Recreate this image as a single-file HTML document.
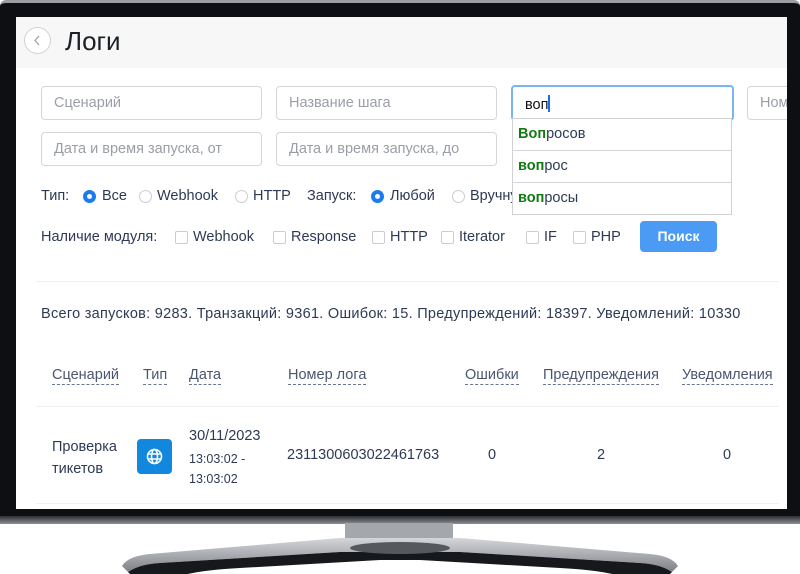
<!DOCTYPE html>
<html><head><meta charset="utf-8"><style>
*{box-sizing:border-box;margin:0;padding:0}
body{width:800px;height:574px;background:#fff;position:relative;overflow:hidden;font-family:"Liberation Sans",sans-serif;color:#2d3a55}
.bezel{position:absolute;left:0;top:0;width:800px;height:524px;background:#0d0f12;border-radius:6px 6px 2px 2px;border-top:3px solid #9a9da2}
.chin{position:absolute;left:0;top:516px;width:800px;height:8px;background:linear-gradient(#2a2c30,#8c8f94)}
.screen{position:absolute;left:16px;top:17px;width:771px;height:492px;background:#fff;overflow:hidden}
.hdr{position:absolute;left:0;top:0;width:771px;height:51px;background:#f7f7f7}
.panel{position:absolute;left:8px;top:51px;width:763px;height:441px;background:#fff}
.abs{position:absolute;white-space:nowrap}
.inp{position:absolute;height:34px;border:1px solid #d4d6da;border-radius:4px;font-size:14.5px;color:#9a9ea6;padding:8px 12px;white-space:nowrap;overflow:hidden}
.t{font-size:14.5px;color:#2d3a55}
.rad{position:absolute;width:13px;height:13px;border:1px solid #c9ccd1;border-radius:50%}
.rad.on{border:4px solid #1a7cf0}
.cb{position:absolute;width:13px;height:13px;border:1px solid #c9ccd1;border-radius:2px}
.dd{position:absolute;left:496px;top:101px;width:220px;height:97px;background:#fff;border:1px solid #cfd1d4}
.dd div{height:32px;border-bottom:1px solid #d4d6d9;font-size:14.5px;padding:7px 5px;color:#2d3a55}
.dd b{color:#137a13}
.th{position:absolute;top:350px;font-size:14.5px;color:#4a5570;border-bottom:1px dashed #6a7590;line-height:17px}
.line{position:absolute;left:20px;width:743px;height:1px;background:#eef0f2}
</style></head><body>
<div class="bezel"></div>
<div class="chin"></div>
<svg class="abs" style="left:0;top:520px" width="800" height="54">
<defs><linearGradient id="g" x1="0" y1="0" x2="0" y2="1"><stop offset="0" stop-color="#d4d6d9"/><stop offset="1" stop-color="#7d8086"/></linearGradient></defs>
<rect x="345" y="3" width="108" height="20" fill="#a4a7ac"/>
<path d="M122 46 Q128 36 150 34 L340 18 L460 18 L650 34 Q672 36 678 46 L672 52 Q660 44 640 43 L460 32 L340 32 L160 43 Q140 44 128 52Z" fill="url(#g)"/>
<path d="M128 52 Q140 44 160 43 L340 32 L460 32 L640 43 Q660 44 672 52 L668 56 L620 56 Q600 50 560 48 L420 40 L380 40 L240 48 Q200 50 180 56 L132 56Z" fill="#17181b"/>
<ellipse cx="400" cy="28" rx="50" ry="6" fill="#55585d"/>
</svg>
<div class="screen">
 <div class="hdr">
  <div class="abs" style="left:8px;top:10px;width:27px;height:27px;border:1px solid #d0d2d5;border-radius:50%;background:#fff"><svg width="25" height="25" viewBox="0 0 25 25"><path d="M14 8L10 12.5L14 17" fill="none" stroke="#a0a4aa" stroke-width="1.3"/></svg></div>
  <div class="abs" style="left:49px;top:9px;font-size:26px;color:#1b1f28">Логи</div>
 </div>
 <div class="panel"></div>
 <div class="inp" style="left:25px;top:69px;width:221px">Сценарий</div>
 <div class="inp" style="left:260px;top:69px;width:221px">Название шага</div>
 <div class="inp" style="left:495px;top:68px;width:223px;height:36px;border:2px solid #7ab4f5;color:#111">воп<span style="display:inline-block;width:2px;height:17px;background:#1a6ff0;vertical-align:-3px"></span></div>
 <div class="inp" style="left:731px;top:69px;width:60px">Ном</div>
 <div class="inp" style="left:25px;top:115px;width:221px">Дата и время запуска, от</div>
 <div class="inp" style="left:260px;top:115px;width:221px">Дата и время запуска, до</div>

 <div class="abs t" style="left:25px;top:171px">Тип:</div>
 <span class="rad on" style="left:67px;top:173px"></span><div class="abs t" style="left:86px;top:171px">Все</div>
 <span class="rad" style="left:123px;top:173px"></span><div class="abs t" style="left:141px;top:171px">Webhook</div>
 <span class="rad" style="left:219px;top:173px"></span><div class="abs t" style="left:237px;top:171px">HTTP</div>
 <div class="abs t" style="left:291px;top:171px">Запуск:</div>
 <span class="rad on" style="left:355px;top:173px"></span><div class="abs t" style="left:374px;top:171px">Любой</div>
 <span class="rad" style="left:436px;top:173px"></span><div class="abs t" style="left:454px;top:171px">Вручную</div>

 <div class="dd"><div><b>Воп</b>росов</div><div><b>воп</b>рос</div><div style="border:none"><b>воп</b>росы</div></div>

 <div class="abs t" style="left:25px;top:212px">Наличие модуля:</div>
 <span class="cb" style="left:159px;top:214px"></span><div class="abs t" style="left:177px;top:212px">Webhook</div>
 <span class="cb" style="left:257px;top:214px"></span><div class="abs t" style="left:275px;top:212px">Response</div>
 <span class="cb" style="left:356px;top:214px"></span><div class="abs t" style="left:374px;top:212px">HTTP</div>
 <span class="cb" style="left:425px;top:214px"></span><div class="abs t" style="left:443px;top:212px">Iterator</div>
 <span class="cb" style="left:510px;top:214px"></span><div class="abs t" style="left:528px;top:212px">IF</div>
 <span class="cb" style="left:557px;top:214px"></span><div class="abs t" style="left:575px;top:212px">PHP</div>
 <div class="abs" style="left:624px;top:204px;width:77px;height:31px;background:#4b9bf4;border-radius:4px;color:#fff;font-size:14px;font-weight:bold;text-align:center;line-height:31px">Поиск</div>
 <div class="line" style="top:264px"></div>
 <div class="abs t" style="left:25px;top:289px;letter-spacing:0.28px">Всего запусков: 9283. Транзакций: 9361. Ошибок: 15. Предупреждений: 18397. Уведомлений: 10330</div>
 <div class="th" style="left:36px">Сценарий</div>
 <div class="th" style="left:127px">Тип</div>
 <div class="th" style="left:173px">Дата</div>
 <div class="th" style="left:272px">Номер лога</div>
 <div class="th" style="left:449px">Ошибки</div>
 <div class="th" style="left:527px">Предупреждения</div>
 <div class="th" style="left:666px">Уведомления</div>
 <div class="line" style="top:389px"></div>
 <div class="abs t" style="left:36px;top:419px;line-height:22px">Проверка<br>тикетов</div>
 <div class="abs" style="left:121px;top:422px;width:35px;height:35px;background:#1188de;border-radius:4px">
  <svg width="35" height="35" viewBox="0 0 35 35"><g fill="none" stroke="#fff" stroke-width="1.6"><circle cx="17.5" cy="17.5" r="7"/><ellipse cx="17.5" cy="17.5" rx="3" ry="7"/><path d="M10.5 15h14M10.5 20h14"/></g></svg>
 </div>
 <div class="abs t" style="left:173px;top:411px">30/11/2023</div>
 <div class="abs" style="left:173px;top:432px;font-size:12.5px;line-height:20px;color:#2d3a55">13:03:02 -<br>13:03:02</div>
 <div class="abs t" style="left:271px;top:430px">2311300603022461763</div>
 <div class="abs t" style="left:472px;top:430px">0</div>
 <div class="abs t" style="left:581px;top:430px">2</div>
 <div class="abs t" style="left:707px;top:430px">0</div>
 <div class="line" style="top:486px"></div>
</div>
</body></html>
